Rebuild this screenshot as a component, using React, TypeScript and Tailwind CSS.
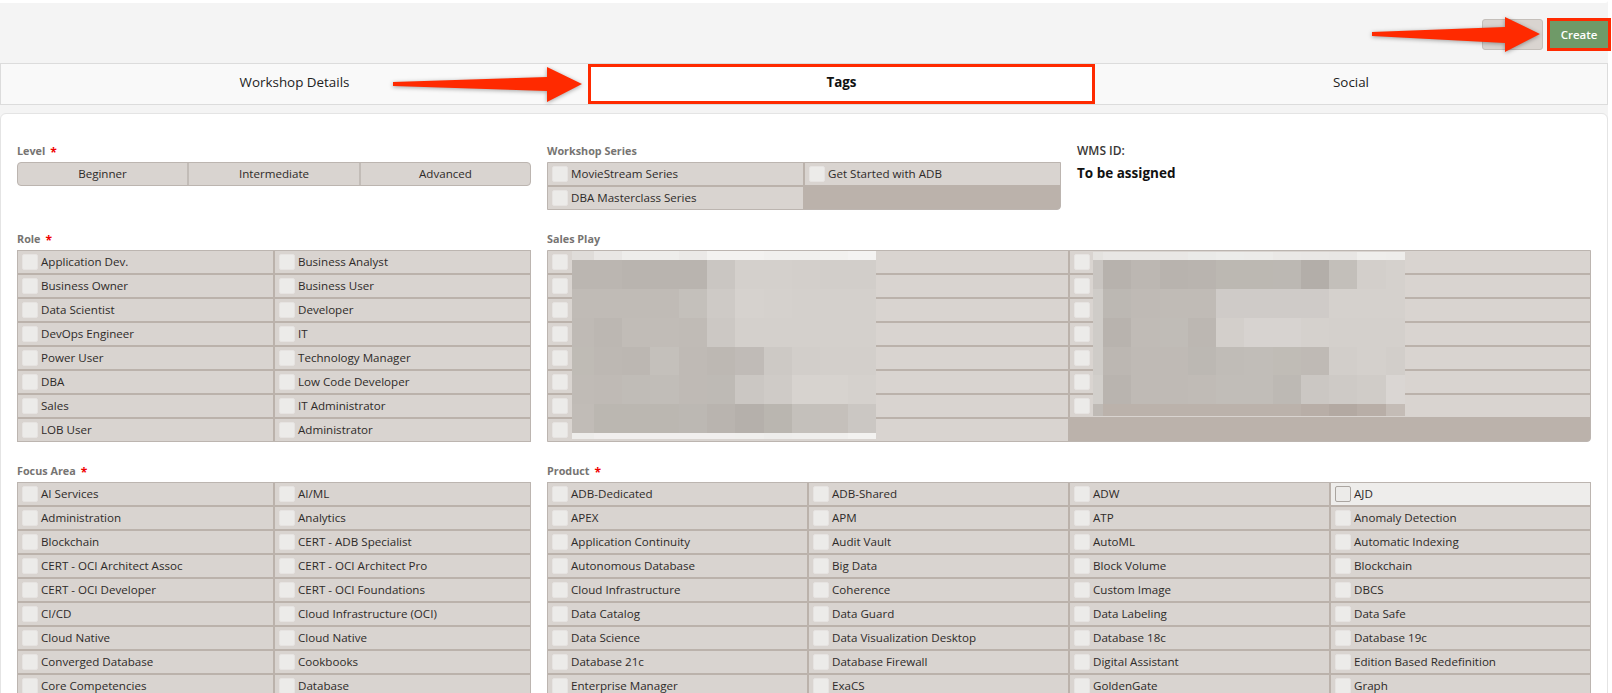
const FONT = "font-['Open_Sans','Noto_Sans',sans-serif]";

const role = [
  "Application Dev.", "Business Analyst", "Business Owner", "Business User", "Data Scientist", "Developer",
  "DevOps Engineer", "IT", "Power User", "Technology Manager", "DBA", "Low Code Developer",
  "Sales", "IT Administrator", "LOB User", "Administrator",
];

const focusArea = [
  "AI Services", "AI/ML", "Administration", "Analytics", "Blockchain", "CERT - ADB Specialist",
  "CERT - OCI Architect Assoc", "CERT - OCI Architect Pro", "CERT - OCI Developer", "CERT - OCI Foundations",
  "CI/CD", "Cloud Infrastructure (OCI)", "Cloud Native", "Cloud Native", "Converged Database", "Cookbooks",
  "Core Competencies", "Database",
];

const product = [
  "ADB-Dedicated", "ADB-Shared", "ADW", "AJD",
  "APEX", "APM", "ATP", "Anomaly Detection",
  "Application Continuity", "Audit Vault", "AutoML", "Automatic Indexing",
  "Autonomous Database", "Big Data", "Block Volume", "Blockchain",
  "Cloud Infrastructure", "Coherence", "Custom Image", "DBCS",
  "Data Catalog", "Data Guard", "Data Labeling", "Data Safe",
  "Data Science", "Data Visualization Desktop", "Database 18c", "Database 19c",
  "Database 21c", "Database Firewall", "Digital Assistant", "Edition Based Redefinition",
  "Enterprise Manager", "ExaCS", "GoldenGate", "Graph",
];

// redacted "Sales Play" labels: mosaic blocks, offsets relative to the grid box
const mosaicA = {
  x: [25, 47, 75, 103, 132, 160, 188, 217, 245, 273, 301, 329],
  y: [1, 10, 39, 68, 97, 125, 154, 183, 189],
  rows: [
    ["#dfdcd9", "#e8e6e4", "#eeedeb", "#eeedeb", "#ebe9e7", "#f3f2f0", "#f3f2f0", "#f1f0ee", "#f1f0ee", "#f2f1ef", "#f4f3f2"],
    ["#bbb6b1", "#bbb6b1", "#b9b4af", "#b9b4af", "#b9b4af", "#cac6c2", "#d4d0cc", "#d4d0cc", "#d3cfcb", "#d2ceca", "#d2ceca"],
    ["#c0bbb6", "#c0bbb6", "#c0bbb6", "#c0bbb6", "#c4c0bb", "#cecac6", "#d6d2ce", "#d5d1cd", "#d4d0cc", "#d4d0cc", "#d4d0cc"],
    ["#bfbab5", "#bcb7b2", "#c1bcb7", "#c1bcb7", "#c0bbb6", "#ccc8c4", "#d4d0cc", "#d4d0cc", "#d4d0cc", "#d4d0cc", "#d4d0cc"],
    ["#bfbbb5", "#bdb8b3", "#bcb7b2", "#c4c0bb", "#bfbab5", "#bdb8b3", "#c0bbb7", "#cdc9c5", "#d2ceca", "#d3cfcb", "#d3cfcb"],
    ["#c0bbb6", "#bfbab5", "#c0bcb7", "#c1bdb8", "#bfbab5", "#bebab5", "#cbc7c3", "#cfcbc7", "#d7d3cf", "#d7d3cf", "#d5d1cd"],
    ["#c1bcb7", "#bbb7b1", "#bbb7b1", "#bbb7b1", "#bcb8b3", "#b9b4af", "#b5b0ab", "#bab6b0", "#c4c0bb", "#c5c0bb", "#cbc7c3"],
    ["#eeedeb", "#f1efee", "#f1efee", "#f1efee", "#f1efee", "#f1efee", "#f0efed", "#eeedeb", "#efeeec", "#f0efed", "#f3f2f0"],
  ],
};

const mosaicB = {
  x: [546, 556, 584, 613, 641, 669, 697, 726, 754, 782, 810, 839, 858],
  y: [2, 10, 39, 68, 97, 125, 154, 166],
  rows: [
    ["#e4e2df", "#e8e6e4", "#e8e6e4", "#e9e7e5", "#eaeae8", "#ececea", "#ecebe9", "#eae8e6", "#e9e7e5", "#e8e6e4", "#efeeec", "#eeedeb"],
    ["#c9c5c1", "#b7b2ad", "#bcb7b2", "#b8b3ae", "#b9b4af", "#bcb8b2", "#bcb8b2", "#bcb8b3", "#b3aea9", "#c3bfba", "#d3cfcb", "#d5d1cd"],
    ["#cfccc8", "#bcb8b3", "#bfbab5", "#c0bbb6", "#c0bbb6", "#cfcbc8", "#cfcbc8", "#cfcbc8", "#cfcbc8", "#d5d1cd", "#d5d1cd", "#d5d1cd"],
    ["#cfccc8", "#b8b3ae", "#c0bbb6", "#c0bcb7", "#bcb7b2", "#d3cfcb", "#d7d3d0", "#d7d3d0", "#d5d1cd", "#d4d0cc", "#d4d0cc", "#d4d0cc"],
    ["#cfccc8", "#bcb7b2", "#bfbab5", "#bfbab5", "#bcb8b3", "#c0bcb7", "#c1bdb8", "#c0bcb6", "#bfbab5", "#d2ceca", "#d4d0cc", "#d2ceca"],
    ["#d2cfcb", "#b9b4af", "#bfbab5", "#bfbab5", "#c0bbb6", "#c1bdb8", "#c1bdb8", "#bdb9b4", "#cbc7c3", "#cecac6", "#d0ccc8", "#dad6d3"],
    ["#bfbab5", "#bbb2ab", "#bbb2ab", "#bbb2ab", "#bbb2ab", "#bbb2ab", "#bbb2ab", "#bbb2ab", "#b8aea7", "#b3a9a2", "#b8aea7", "#c4bcb6"],
  ],
};

function Mosaic({ data }: { data: typeof mosaicA }) {
  return (
    <>
      {data.rows.map((row, r) =>
        row.map((fill, c) => (
          <rect
            key={`${r}-${c}`}
            x={data.x[c]}
            y={data.y[r]}
            width={data.x[c + 1] - data.x[c]}
            height={data.y[r + 1] - data.y[r]}
            fill={fill}
          />
        )),
      )}
    </>
  );
}

function FieldLabel({ text, required }: { text: string; required?: boolean }) {
  return (
    <div className="mb-[3px] flex h-4 items-center gap-[5px] text-[10.8px] font-bold text-[#767472]">
      {text}
      {required && <span className="translate-y-[2px] text-[12px] text-[#f00000]">*</span>}
    </div>
  );
}

function CheckCell({ label, active }: { label?: string; active?: boolean }) {
  return (
    <div className={`flex h-[22px] items-center gap-[3px] pl-[4px] text-[11.6px] text-[#2e2b29] ${active ? "bg-[#eeedeb]" : "bg-[#d9d4d0]"}`}>
      <span className={`h-4 w-4 shrink-0 rounded-[2px] border bg-[#ecebe9] ${active ? "border-[#aaa5a0]" : "border-[#e6e3e1]"}`} />
      {label}
    </div>
  );
}

function CheckGrid({ items, cols, rounded }: { items: string[]; cols: string; rounded?: boolean }) {
  return (
    <div className={`grid gap-[2px] border border-[#bcb5b0] bg-[#bbb2ab] ${cols} ${rounded ? "rounded-br-[4px]" : ""}`}>
      {items.map((item, i) => (
        <CheckCell key={i} label={item} active={item === "AJD"} />
      ))}
    </div>
  );
}

export default function App() {
  return (
    <div className={`h-[693px] w-[1612px] overflow-hidden bg-white ${FONT}`}>
      <div className="relative h-full w-[1608px] bg-[#f4f4f4]">
        <div className="h-[3px] rounded-br-[3px] bg-white" />

        {/* Actions */}
        <div className="flex h-[60px] justify-end gap-[7px] pt-4">
          <button className="h-[31px] w-[61px] rounded-[3px] border border-[#c4bfba] bg-[#d9d4d0]" />
          <button className="h-[27px] w-[58px] translate-y-[2px] bg-[#6f9a68] text-[11.5px] font-semibold text-white outline-[3px] outline-[#ff2a00]">
            Create
          </button>
        </div>

        {/* Tabs */}
        <div className="grid h-[42px] grid-cols-[587px_507px_1fr] border border-[#dcdcdc] bg-[#f9f9f9] pb-0 text-[13.4px] text-[#222222]">
          <div className="flex items-center justify-center pb-[3px]">Workshop Details</div>
          <div className="flex items-center justify-center border-[3px] border-[#ff2a00] bg-white pb-[3px] font-bold text-[#111111]">Tags</div>
          <div className="flex items-center justify-center pb-[3px]">Social</div>
        </div>

        {/* Form panel */}
        <div className="mt-2 h-[600px] rounded-t-[6px] border border-[#e4e4e4] bg-white pl-4 pt-[29px]">
          <div className="flex h-[88px] gap-4">
            <div className="w-[514px]">
              <FieldLabel text="Level" required />
              <div className="grid h-6 grid-cols-[171px_172px_1fr] divide-x-2 divide-[#c2bcb7] rounded-[4px] border border-[#bcb5b0] bg-[#d9d4d0] text-[11.6px] text-[#2e2b29]">
                <div className="flex items-center justify-center">Beginner</div>
                <div className="flex items-center justify-center">Intermediate</div>
                <div className="flex items-center justify-center">Advanced</div>
              </div>
            </div>
            <div className="w-[514px]">
              <FieldLabel text="Workshop Series" />
              <CheckGrid
                rounded
                cols="grid-cols-2"
                items={["MovieStream Series", "Get Started with ADB", "DBA Masterclass Series"]}
              />
            </div>
            <div>
              <div className="mb-1 text-[12px] font-semibold leading-4 text-[#3a3836]">WMS ID:</div>
              <div className="text-[13.5px] font-bold leading-5 text-[#111111]">To be assigned</div>
            </div>
          </div>

          <div className="flex h-[232px] gap-4">
            <div className="w-[514px]">
              <FieldLabel text="Role" required />
              <CheckGrid cols="grid-cols-2" items={role} />
            </div>
            <div className="w-[1044px]">
              <FieldLabel text="Sales Play" />
              <div className="relative">
                <CheckGrid rounded cols="grid-cols-2" items={[...Array(15)].map(() => "")} />
                <svg className="absolute left-0 top-0" width="1044" height="192" shapeRendering="crispEdges">
                  <Mosaic data={mosaicA} />
                  <Mosaic data={mosaicB} />
                </svg>
              </div>
            </div>
          </div>

          <div className="flex gap-4">
            <div className="w-[514px]">
              <FieldLabel text="Focus Area" required />
              <CheckGrid cols="grid-cols-2" items={focusArea} />
            </div>
            <div className="w-[1044px]">
              <FieldLabel text="Product" required />
              <CheckGrid cols="grid-cols-4" items={product} />
            </div>
          </div>
        </div>

        {/* Annotation arrows */}
        <svg className="pointer-events-none absolute left-0 top-0 drop-shadow-[0_1px_2px_rgba(0,0,0,0.35)]" width="1608" height="120">
          <path d="M393 82 L547 77 L547 67 L582 84 L547 102 L547 91 L393 86 Z" fill="#ff2a00" />
          <path d="M1372 32 L1505 27 L1505 17 L1540 34 L1505 52 L1505 43 L1372 36 Z" fill="#ff2a00" />
        </svg>
      </div>
    </div>
  );
}
